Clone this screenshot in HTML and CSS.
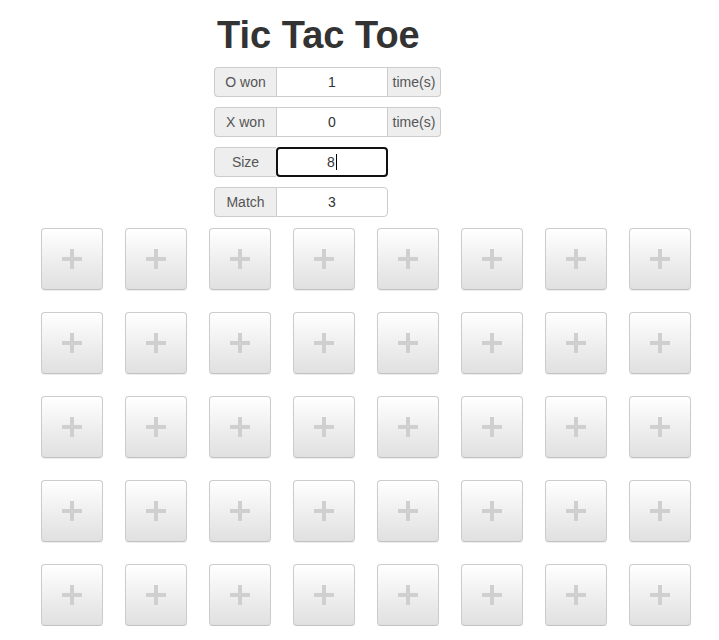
FILE: index.html
```html
<!DOCTYPE html>
<html>
<head>
<meta charset="utf-8">
<link rel="stylesheet" href="styles.css">
</head>
<body>
<div class="panel">
  <h1 class="title">Tic Tac Toe</h1>
  <div class="group">
    <span class="addon label">O won</span>
    <span class="field">1</span>
    <span class="addon suffix">time(s)</span>
  </div>
  <div class="group">
    <span class="addon label">X won</span>
    <span class="field">0</span>
    <span class="addon suffix">time(s)</span>
  </div>
  <div class="group">
    <span class="addon label">Size</span>
    <span class="field focused">8<span class="caret"></span></span>
  </div>
  <div class="group">
    <span class="addon label">Match</span>
    <span class="field">3</span>
  </div>
</div>
<div class="board" id="board"></div>
<script>
  var b = document.getElementById('board');
  var html = '';
  for (var r = 0; r < 5; r++) {
    html += '<div class="row">';
    for (var c = 0; c < 8; c++) {
      html += '<button class="cell"><svg width="20" height="20" viewBox="0 0 20 20"><rect x="8" y="0" width="4" height="20" fill="#cfcfcf"/><rect x="0" y="8" width="20" height="4" fill="#cfcfcf"/></svg></button>';
    }
    html += '</div>';
  }
  b.innerHTML = html;
</script>
</body>
</html>
```
FILE: styles.css
```css
* { box-sizing: border-box; }
html, body { margin: 0; padding: 0; background: #fff; }
body {
  font-family: "Liberation Sans", Arial, sans-serif;
  font-size: 14px;
  color: #333;
}
.panel {
  margin-left: 214px;
  padding-top: 15px;
  display: flex;
  flex-direction: column;
  align-items: flex-start;
  gap: 10px;
}
.title {
  margin: 0 0 2px 3px;
  font-size: 38px;
  line-height: 40px;
  font-weight: bold;
  color: #333;
}
.group {
  display: flex;
  height: 30px;
}
.addon {
  display: flex;
  align-items: center;
  justify-content: center;
  background: #eee;
  border: 1px solid #ccc;
  color: #555;
  height: 30px;
}
.label {
  width: 62px;
  border-radius: 4px 0 0 4px;
  border-right: 0;
}
.suffix {
  width: 53px;
  border-radius: 0 4px 4px 0;
  border-left: 0;
}
.field {
  width: 112px;
  height: 30px;
  border: 1px solid #ccc;
  display: flex;
  align-items: center;
  justify-content: center;
  color: #333;
  background: #fff;
}
.group .field:last-child { border-radius: 0 4px 4px 0; }
.field.focused {
  border: 2px solid #111;
  border-radius: 4px !important;
}
.caret {
  display: inline-block;
  width: 1px;
  height: 16px;
  background: #000;
  margin-left: 1px;
}
.board {
  margin-top: 11px;
  padding-left: 41px;
  display: flex;
  flex-direction: column;
  gap: 22px;
}
.row {
  display: flex;
  gap: 22px;
}
.cell {
  width: 62px;
  height: 62px;
  padding: 0;
  margin: 0;
  border: 1px solid #ccc;
  border-bottom-color: #c2c2c2;
  border-radius: 4px;
  background: linear-gradient(to bottom, #fff 0%, #e0e0e0 100%);
  box-shadow: inset 0 1px 0 rgba(255,255,255,.15), 0 1px 1px rgba(0,0,0,.075);
  display: flex;
  align-items: center;
  justify-content: center;
}
.cell svg { display: block; }
```
